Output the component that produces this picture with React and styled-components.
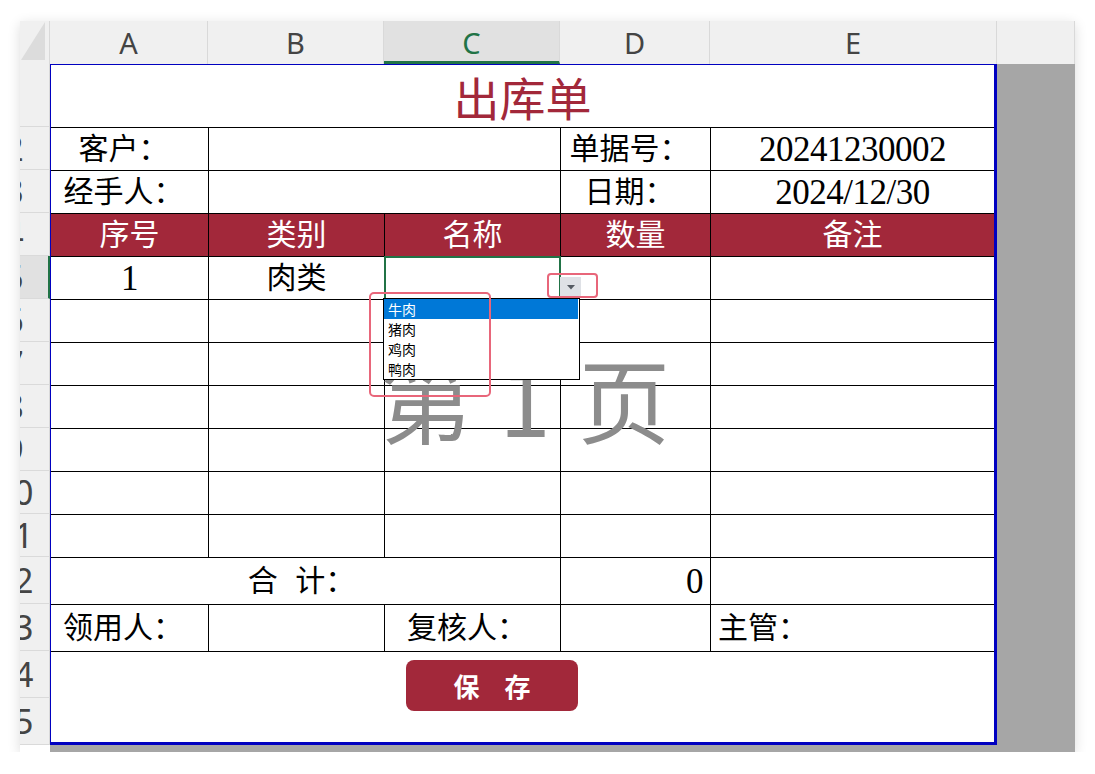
import React from "react";
import styled, { createGlobalStyle } from "styled-components";

const GlobalStyle = createGlobalStyle`
  html, body { margin: 0; padding: 0; background: #ffffff; }
  body { font-family: "Noto Sans", "Noto Sans CJK SC", sans-serif; }
  * { box-sizing: border-box; }
`;

const SERIF = `"Liberation Serif", "Noto Sans CJK SC", serif`;
const CJK = `"Noto Sans CJK SC", "Noto Sans", sans-serif`;
const RED = "#a2283a";
const GREEN = "#217346";

const Window = styled.div`
  margin: 21px 0 0 20px;
  width: 1055px;
  display: grid;
  grid-template-columns: 30px 1025px;
  grid-template-rows: 43px 688px;
  background: #ffffff;
  box-shadow: 0 3px 12px rgba(0, 0, 0, 0.14);
`;

const Corner = styled.div`
  background: #f0f0f0;
  border-right: 1px solid #d9d9d9;
  display: flex;
  align-items: flex-end;
  justify-content: flex-end;
  padding: 0 4px 4px 0;
`;

const ColHeaderRow = styled.div`
  display: flex;
  background: #f0f0f0;
`;

const ColHead = styled.div`
  flex: none;
  width: ${(p) => p.$w}px;
  height: 43px;
  border-right: 1px solid #d9d9d9;
  border-bottom: ${(p) => (p.$selected ? `3px solid ${GREEN}` : "none")};
  background: ${(p) => (p.$selected ? "#e1e1e1" : "#f0f0f0")};
  color: ${(p) => (p.$selected ? GREEN : "#444444")};
  font-family: "Noto Sans", sans-serif;
  font-size: 29px;
  line-height: 1;
  display: flex;
  align-items: center;
  justify-content: center;
  padding-top: ${(p) => (p.$selected ? 3 : 0)}px;
`;

const RowHeaderCol = styled.div`
  display: flex;
  flex-direction: column;
`;

const RowHead = styled.div`
  flex: none;
  height: ${(p) => p.$h}px;
  background: ${(p) => (p.$selected ? "#e1e1e1" : "#f0f0f0")};
  border-bottom: 1px solid #dadada;
  border-right: ${(p) => (p.$selected ? `2px solid ${GREEN}` : "1px solid #d9d9d9")};
  overflow: hidden;
  display: flex;
  align-items: center;
`;

const RowLabel = styled.span`
  flex: none;
  width: 60px;
  margin-left: -36px;
  text-align: center;
  font-family: "Noto Sans", sans-serif;
  font-size: 34px;
  line-height: 1;
  color: #444444;
`;

const SheetArea = styled.div`
  background: #a6a6a6;
  padding: 0 78px 7px 0;
`;

const Form = styled.div`
  position: relative;
  width: 947px;
  display: grid;
  grid-template-columns: 157px 175px 175px 149px 283px;
  grid-template-rows: 62px repeat(10, 42px) 46px 46px 90px;
  gap: 1px;
  background: #000000;
  border-style: solid;
  border-color: #0000c0;
  border-width: 1px 3px 3px 1px;
`;

const Cell = styled.div`
  position: relative;
  grid-column: span ${(p) => p.$span || 1};
  background: ${(p) => (p.$head ? RED : "#ffffff")};
  color: ${(p) => (p.$head ? "#ffffff" : "#000000")};
  display: flex;
  align-items: ${(p) => p.$valign || "center"};
  justify-content: ${(p) => p.$align || "center"};
  padding: ${(p) => p.$pt || 0}px ${(p) => p.$pr || 0}px 0 ${(p) => p.$pl || 0}px;
  font-family: ${SERIF};
  font-size: 30px;
  line-height: 1;
  white-space: pre;
  word-spacing: ${(p) => p.$ws || 0}px;
  ${(p) =>
    p.$selected &&
    `z-index: 1; box-shadow: 0 0 0 1px ${GREEN}, inset 0 0 0 1px ${GREEN};`}
`;

const Title = styled.span`
  font-family: ${CJK};
  font-size: 46px;
  color: ${RED};
  line-height: 1;
`;

const Value = styled.span`
  font-family: "Liberation Serif", serif;
  font-size: 35px;
  letter-spacing: -0.5px;
  line-height: 1;
`;

const SaveButton = styled.button`
  width: 172px;
  height: 51px;
  border: none;
  border-radius: 8px;
  background: ${RED};
  color: #ffffff;
  font-family: ${CJK};
  font-weight: 700;
  font-size: 26px;
  word-spacing: 19px;
  display: flex;
  align-items: center;
  justify-content: center;
  padding: 0;
`;

const Watermark = styled.div`
  position: absolute;
  left: 329px;
  top: 286px;
  z-index: 2;
  font-family: ${CJK};
  font-size: 92px;
  line-height: 1;
  color: #8c8c8c;
  white-space: pre;
  word-spacing: 7px;
  pointer-events: none;
`;

const DropButton = styled.div`
  position: absolute;
  left: 509px;
  top: 212px;
  width: 21px;
  height: 20px;
  z-index: 3;
  background: #dfe1e6;
  display: flex;
  align-items: center;
  justify-content: center;
`;

const DropList = styled.ul`
  position: absolute;
  left: 332px;
  top: 233px;
  width: 197px;
  height: 82px;
  margin: 0;
  padding: 0;
  list-style: none;
  z-index: 3;
  background: #ffffff;
  border: 1px solid #000000;
`;

const DropItem = styled.li`
  height: 20px;
  padding-left: 4px;
  display: flex;
  align-items: center;
  font-family: ${CJK};
  font-size: 14px;
  line-height: 1;
  background: ${(p) => (p.$active ? "#0078d7" : "transparent")};
  color: ${(p) => (p.$active ? "#ffffff" : "#000000")};
  margin-right: 1px;
`;

const Highlight = styled.div`
  position: absolute;
  left: ${(p) => p.$x}px;
  top: ${(p) => p.$y}px;
  width: ${(p) => p.$w}px;
  height: ${(p) => p.$h}px;
  z-index: 4;
  border: 2px solid #e8667a;
  border-radius: ${(p) => p.$r}px;
  pointer-events: none;
`;

const columns = [
  { key: "A", w: 158 },
  { key: "B", w: 176 },
  { key: "C", w: 176, selected: true },
  { key: "D", w: 150 },
  { key: "E", w: 287 },
  { key: "", w: 78 },
];

const rowHeights = [63, 43, 43, 43, 43, 43, 43, 43, 43, 43, 43, 47, 47, 47, 47];

const heads = ["序号", "类别", "名称", "数量", "备注"];
const options = ["牛肉", "猪肉", "鸡肉", "鸭肉"];

export default function App() {
  return (
    <>
      <GlobalStyle />
      <Window>
        <Corner>
          <svg width="24" height="38" viewBox="0 0 24 38">
            <polygon points="24,0 24,38 0,38" fill="#dcdcdc" />
          </svg>
        </Corner>
        <ColHeaderRow>
          {columns.map((c, i) => (
            <ColHead key={i} $w={c.w} $selected={c.selected}>
              {c.key}
            </ColHead>
          ))}
        </ColHeaderRow>
        <RowHeaderCol>
          {rowHeights.map((h, i) => (
            <RowHead key={i} $h={h} $selected={i === 4}>
              <RowLabel>{i + 1}</RowLabel>
            </RowHead>
          ))}
        </RowHeaderCol>
        <SheetArea>
          <Form>
            <Cell $span={5}>
              <Title>出库单</Title>
            </Cell>

            <Cell $pr={12}>客户：</Cell>
            <Cell $span={2} />
            <Cell $pr={12}>单据号：</Cell>
            <Cell>
              <Value>20241230002</Value>
            </Cell>

            <Cell $pr={12}>经手人：</Cell>
            <Cell $span={2} />
            <Cell $pr={12}>日期：</Cell>
            <Cell>
              <Value>2024/12/30</Value>
            </Cell>

            {heads.map((h) => (
              <Cell key={h} $head>
                {h}
              </Cell>
            ))}

            <Cell>
              <Value>1</Value>
            </Cell>
            <Cell>肉类</Cell>
            <Cell $selected />
            <Cell />
            <Cell />

            {Array.from({ length: 30 }).map((_, i) => (
              <Cell key={`e${i}`} />
            ))}

            <Cell $span={3} $ws={10} $pr={8}>
              合 计：
            </Cell>
            <Cell $align="flex-end" $pr={7}>
              <Value>0</Value>
            </Cell>
            <Cell />

            <Cell $align="flex-start" $pl={12}>领用人：</Cell>
            <Cell />
            <Cell $align="flex-start" $pl={22}>复核人：</Cell>
            <Cell />
            <Cell $align="flex-start" $pl={7}>主管：</Cell>

            <Cell $span={5} $align="flex-start" $valign="flex-start" $pt={8} $pl={355}>
              <SaveButton>保 存</SaveButton>
            </Cell>

            <Watermark>第 1 页</Watermark>
            <DropButton>
              <svg width="8" height="5" viewBox="0 0 8 5">
                <polygon points="0,0 8,0 4,4.5" fill="#555a63" />
              </svg>
            </DropButton>
            <DropList>
              {options.map((o, i) => (
                <DropItem key={o} $active={i === 0}>
                  {o}
                </DropItem>
              ))}
            </DropList>
            <Highlight $x={496} $y={208} $w={51} $h={25} $r={4} />
            <Highlight $x={318} $y={227} $w={122} $h={105} $r={5} />
          </Form>
        </SheetArea>
      </Window>
    </>
  );
}
